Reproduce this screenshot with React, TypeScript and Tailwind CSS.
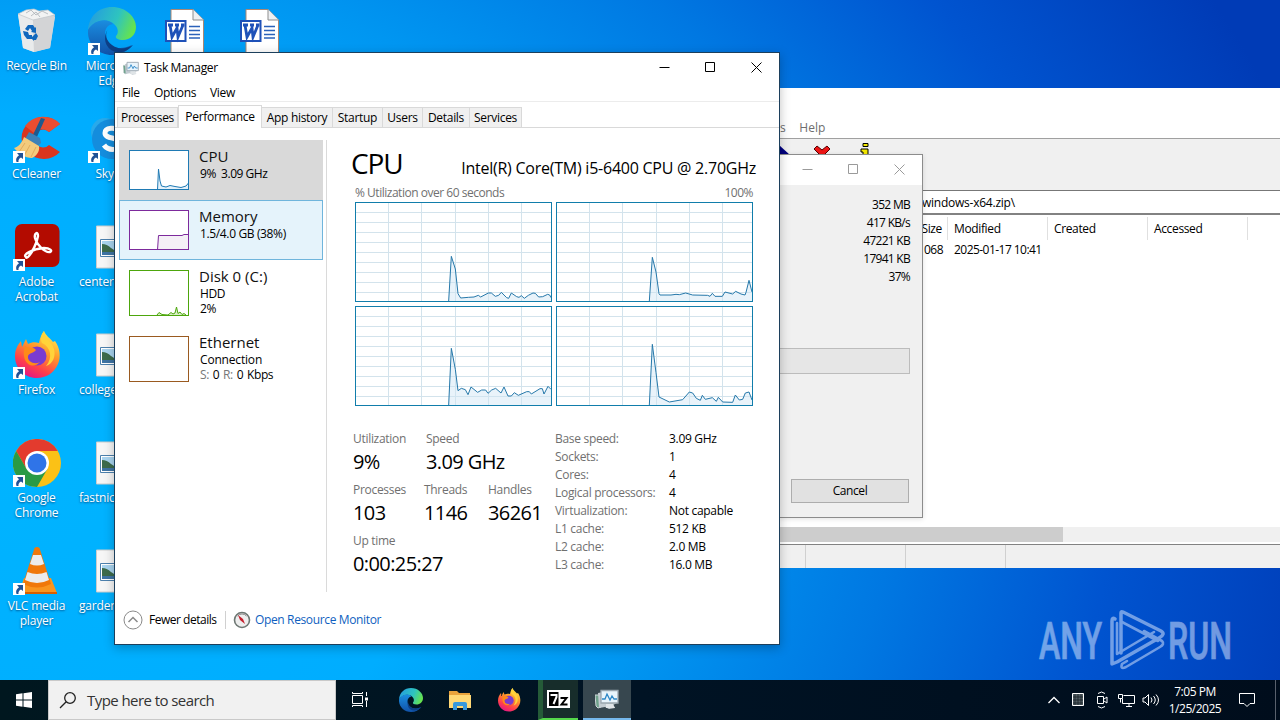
import type { ReactNode } from "react";

type Tone = "cpu" | "memory" | "disk" | "network";

const TABS = [
  { label: "Processes", width: "w-[61px]" },
  { label: "Performance", width: "w-[84px]", active: true },
  { label: "App history", width: "w-[71px]" },
  { label: "Startup", width: "w-[50px]" },
  { label: "Users", width: "w-[40px]" },
  { label: "Details", width: "w-[47px]" },
  { label: "Services", width: "w-[52px]" },
];

const CORES = [
  "281,297 289,163 301,201 309,275 317,288 340,286 357,285 370,280 377,285 400,273 409,273 421,283 431,280 439,271 455,287 461,289 469,273 485,284 492,286 499,281 508,289 520,280 534,273 541,274 551,285 563,284 578,277 584,279 588,287",
  "280,297 289,166 300,210 309,275 312,279 345,279 360,277 370,278 389,273 410,279 455,280 462,283 469,274 477,283 499,283 507,270 530,276 539,268 555,276 567,279 570,271 579,235 588,270",
  "281,297 289,127 301,190 309,254 319,247 331,251 339,266 348,243 368,259 380,252 392,252 399,262 410,252 422,247 438,261 447,243 459,270 469,270 478,260 490,268 515,257 523,257 529,264 555,248 562,248 567,264 579,241 588,250",
  "280,297 289,115 300,200 309,273 340,288 380,281 400,258 410,261 421,277 433,283 439,268 448,280 469,275 481,286 487,274 500,288 530,289 538,267 550,282 560,280 568,261 579,258 588,282",
];

const DETAILS = [
  ["Base speed:", "3.09 GHz"],
  ["Sockets:", "1"],
  ["Cores:", "4"],
  ["Logical processors:", "4"],
  ["Virtualization:", "Not capable"],
  ["L1 cache:", "512 KB"],
  ["L2 cache:", "2.0 MB"],
  ["L3 cache:", "16.0 MB"],
];

const THUMBS: Record<Tone, { stroke: string; fill: string; height: number; points: string }> = {
  cpu: {
    stroke: "#1f7ab4",
    fill: "#e4f1fa",
    height: 40,
    points: "28.5,40 29.5,19 31,31 32.5,36 37,37 41,35.5 46,36.5 52,37.5 57,36 59.5,33",
  },
  memory: { stroke: "#7d2a9c", fill: "#f4eff6", height: 40, points: "28.5,40 29.5,25.5 53,25.5 55,24.5 60,24.5" },
  disk: {
    stroke: "#4da60c",
    fill: "#d9efc8",
    height: 46,
    points: "28,45 30,42.5 33,44.5 39,45 42,42.5 44,44 46,43 47.5,37 49,43.5 51,42 53,44.5 55,43.5 57,45",
  },
  network: { stroke: "#9a5a20", fill: "none", height: 46, points: "" },
};

/* ---------- icons ---------- */

function RecycleBin() {
  return (
    <svg viewBox="0 0 48 48" className="size-12">
      <path d="M5 7l5 34 11 4 16-4 5-31-13-4z" fill="#d9dcde" />
      <path d="M5 7l15 5 1 33-11-4z" fill="#e9ebec" />
      <path d="M20 12l22-4-5 33-16 4z" fill="#d3d4d6" />
      <path d="M5 7l8-4 8-1 5 2 9-1 7 5-22 5z" fill="#f2f3f3" stroke="#bfc4c8" strokeWidth=".7" />
      <path d="M13 6l5-3 5 5 6-4 6 3M18 9l5-4 4 5" fill="none" stroke="#a9b0b5" strokeWidth=".8" />
      <g fill="#1168bd">
        <path d="M12 22l3-4h5l2 3 1-1v6l-5-1 1-1-2-3-2 3z" />
        <path d="M10 24l5 1 1 3 3 0v4h-5l-3-4z" />
        <path d="M20 29l3-3 2 3-2 4h-2v1l-3-3 3-3z" />
      </g>
    </svg>
  );
}

function EdgeLogo({ className, id }: { className: string; id: string }) {
  return (
    <svg viewBox="0 0 48 48" className={className}>
      <defs>
        <linearGradient id={`${id}a`} x1="0" y1=".2" x2="1" y2=".5">
          <stop offset="0" stopColor="#249be0" />
          <stop offset=".6" stopColor="#2ec4bf" />
          <stop offset="1" stopColor="#66e34e" />
        </linearGradient>
        <linearGradient id={`${id}b`} x1="0" y1="0" x2="0" y2="1">
          <stop offset="0" stopColor="#1a8de0" />
          <stop offset="1" stopColor="#1152a8" />
        </linearGradient>
      </defs>
      <path d="M0 23C1 9 11 0 24 0c14 0 24 10 24 20 0 8-6 13-13 13-5 0-8-2-7-4 3-3 2-8-1-11-6-7-20-6-27 5z" fill={`url(#${id}a)`} />
      <path d="M0 23c5-10 19-13 25-6-8 1-10 10-6 17 5 8 15 9 25 4-4 6-11 10-20 10C10 48-1 37 0 23z" fill={`url(#${id}b)`} />
      <path d="M21 21c-5 5-3 13 3 17 6 5 14 4 21 0-4 5-10 8-16 7-11-1-16-15-8-24z" fill="#0d3f86" />
    </svg>
  );
}

function WordDoc() {
  return (
    <svg viewBox="0 0 48 48" className="size-12">
      <path d="M8 2.500h22l10.500 10.500v35H8z" fill="#fff" stroke="#a98774" strokeWidth="1" />
      <path d="M30 2.500V13h10.500" fill="#eef0f2" stroke="#8d8d8d" strokeWidth="1" />
      <path d="M26 19.500h11M26 23.500h11M26 27.500h11M26 31h11" stroke="#2b62ba" strokeWidth="1.300" />
      <rect x="2" y="13" width="21.500" height="22" fill="#1e51b8" />
      <rect x="4" y="15" width="17.500" height="18" fill="#fff" />
      <path d="M5 18h5M12 18h4M18 18h3.500M7 18l2 12 5-9 1 9 5-12" fill="none" stroke="#1e51b8" strokeWidth="2.800" />
    </svg>
  );
}

function CCleaner() {
  return (
    <svg viewBox="0 0 48 48" className="size-12">
      <path d="M47 9A22 21 0 1 0 47 37L36 30a8.500 9 0 1 1 0-13z" fill="#d9351f" />
      <path d="M47 9A22 21 0 0 0 12 11l9 7c4-5 10-5 15-1z" fill="#ea4d30" />
      <path d="M28 3l4 1-9 20-4-2z" fill="#1d5a8f" />
      <path d="M16 17l11 6 1 5-3 3-13-7z" fill="#3d81b8" />
      <path d="M11 22l15 9c1 6-3 10-7 12C12 43 5 38 1 33c4-1 8-5 10-11z" fill="#f3cb7d" />
      <path d="M12 28L6 37m11-7l-6 11m12-9l-5 10" stroke="#e2ac5c" strokeWidth="1" />
    </svg>
  );
}

function SkypeLogo() {
  return (
    <svg viewBox="0 0 48 48" className="size-12">
      <circle cx="17" cy="17" r="14" fill="#29a9ea" />
      <circle cx="31" cy="31" r="14" fill="#1070c4" />
      <circle cx="24" cy="24" r="20" fill="#148ddd" />
      <path d="M31 16c-3-4-14-4-14 2 0 7 15 3 15 11 0 7-12 7-16 1" fill="none" stroke="#fff" strokeWidth="5" />
    </svg>
  );
}

function AcrobatLogo() {
  return (
    <svg viewBox="0 0 48 48" className="size-12">
      <rect x="2" y="1" width="44.500" height="43" rx="7" fill="#b30b00" />
      <path
        d="M13 34c-4-2 6-8 18-9 6 0 9 3 6 4-5 1-13-7-15-14-1-5 3-7 3-2-1 7-6 17-10 21-1 1-2 1-2 0z"
        fill="none"
        stroke="#fff"
        strokeWidth="2.400"
      />
    </svg>
  );
}

function FirefoxLogo({ className, id }: { className: string; id: string }) {
  return (
    <svg viewBox="0 0 48 48" className={className}>
      <defs>
        <linearGradient id={id} x1=".8" y1="0" x2=".3" y2="1">
          <stop offset="0" stopColor="#fff44f" />
          <stop offset=".4" stopColor="#ff9a2a" />
          <stop offset=".75" stopColor="#ff3f4b" />
          <stop offset="1" stopColor="#e31587" />
        </linearGradient>
      </defs>
      <path d="M31 0c2 5 6 7 9 11l2-1c5 7 6 16 3 23-4 9-12 14-21 14C11 47 2 37 2 25c0-6 2-10 6-15l1 6 4-8 2 5c4-2 7-2 11-1 1-5 2-8 5-12z" fill={`url(#${id})`} />
      <circle cx="24" cy="25" r="9.500" fill="#7a3bd0" />
      <path d="M12 15c3 3 8 0 11 4-2 3-7 3-8 6-1 6 7 9 12 6-8 9-20 0-15-16z" fill="#ff8a18" />
      <path d="M29 12c9 4 11 15 4 23 7-2 10-10 8-17-2-8-10-10-10-18-3 4-4 8-2 12z" fill="#ffd33a" />
    </svg>
  );
}

function ChromeLogo() {
  return (
    <svg viewBox="0 0 48 48" className="size-12">
      <circle cx="24" cy="24" r="24" fill="#fbc116" />
      <path d="M3.200 12A24 24 0 0 1 44.800 12H24L13.600 30z" fill="#e33b2e" />
      <path d="M3.200 12A24 24 0 0 0 24 48l10.400-18H13.600z" fill="#2a9a45" />
      <circle cx="24" cy="24" r="12" fill="#fff" />
      <circle cx="24" cy="24" r="9.500" fill="#2f74e8" />
    </svg>
  );
}

function VlcCone() {
  return (
    <svg viewBox="0 0 48 48" className="size-12">
      <path d="M11 31h27l6 15H6z" fill="#f9951f" />
      <path d="M6 45h38v2H6z" fill="#d85f00" />
      <path d="M21.500 1q2.500-2 5 0l11.500 36q-14 7-28 0z" fill="#f0780a" />
      <path d="M20 8h8l3 9q-7 3-14 0zM14.500 25q9.500 4 19 0l2.500 8q-12 6-24 0z" fill="#ececec" />
    </svg>
  );
}

function PictureFile() {
  return (
    <svg viewBox="0 0 48 48" className="size-12">
      <path d="M8.500 3h32v42h-32z" fill="#f6f6f6" stroke="#ccc" />
      <path d="M12.500 16.500h24v17h-24z" fill="#fff" stroke="#4c80ad" />
      <path d="M14 18h21v14H14z" fill="#a9d4ef" />
      <path d="M14 21q5 0 9 4t12 2v5H14z" fill="#3d6b4c" />
      <path d="M14 29h21v3H14z" fill="#3f74a4" />
    </svg>
  );
}

function ShortcutArrow() {
  return (
    <svg viewBox="0 0 12 12" className="absolute bottom-0 left-0 size-3">
      <path d="M0 0h12v12H0z" fill="#fff" />
      <path d="M4 2h6v6L8 6.500Q5 8 5.500 11H3.500Q2 7 6 4.300z" fill="#215296" />
    </svg>
  );
}

function MonitorIcon({ className }: { className: string }) {
  return (
    <svg viewBox="0 0 24 24" className={className}>
      <path d="M0 8h6v12l-3 1-2-2z" fill="#6fa28c" stroke="#cdd5d8" />
      <path d="M3 6l17-3 2 13-4 2 2 3-6 1-4-2-6 1z" fill="#c3ccd2" />
      <path d="M6 3.500h17v12.500H6z" fill="#e8f4fc" stroke="#9aa6af" strokeWidth="1.300" />
      <path d="M7 12h3l2-5 3 6 2-4 2 3h3" fill="none" stroke="#2d86c6" strokeWidth="1.300" />
      <path d="M11 17h7l2 4h-9z" fill="#dfe4e7" />
    </svg>
  );
}

function WindowButtons({ muted = false }: { muted?: boolean }) {
  return (
    <div className={muted ? "flex text-[#9a9a9a]" : "flex text-black"}>
      {["M.5 5.500h10", "M.5 .5h9v9h-9z", "M.5 .5l10 10m0-10l-10 10"].map((path) => (
        <span key={path} className="flex h-[29px] w-[46px] items-center justify-center">
          <svg viewBox="0 0 11 11" className="size-[11px]" fill="none" stroke="currentColor">
            <path d={path} />
          </svg>
        </span>
      ))}
    </div>
  );
}

/* ---------- desktop ---------- */

const DESKTOP: { label: string; icon: ReactNode; shortcut?: boolean; clipped?: boolean }[] = [
  { label: "Recycle Bin", icon: <RecycleBin /> },
  { label: "CCleaner", icon: <CCleaner />, shortcut: true },
  { label: "Adobe Acrobat", icon: <AcrobatLogo />, shortcut: true },
  { label: "Firefox", icon: <FirefoxLogo className="size-12" id="ffDesk" />, shortcut: true },
  { label: "Google Chrome", icon: <ChromeLogo />, shortcut: true },
  { label: "VLC media player", icon: <VlcCone />, shortcut: true },
  { label: "Microsoft Edge", icon: <EdgeLogo className="size-12" id="edgeDesk" />, shortcut: true },
  { label: "Skype", icon: <SkypeLogo />, shortcut: true },
  { label: "centers", icon: <PictureFile />, clipped: true },
  { label: "college", icon: <PictureFile />, clipped: true },
  { label: "fastnic", icon: <PictureFile />, clipped: true },
  { label: "garden", icon: <PictureFile />, clipped: true },
  { label: "", icon: <WordDoc /> },
];

function DesktopIcon({ label, icon, shortcut, clipped }: (typeof DESKTOP)[number]) {
  return (
    <div className="h-[108px] w-[75px]">
      <div className="relative ml-[13px] size-12">
        {icon}
        {shortcut ? <ShortcutArrow /> : null}
      </div>
      <p
        className={`mt-[3px] text-[12px] leading-[15px] tracking-[-0.015em] text-white [text-shadow:0_1px_2px_rgba(0,40,90,.7)] ${
          clipped ? "pl-1 text-left" : "pr-[5px] pl-[3px] text-center"
        }`}
      >
        {label}
      </p>
    </div>
  );
}

/* ---------- 7-Zip windows ---------- */

function ArchiveWindow() {
  return (
    <section className="absolute top-[88px] left-[779px] flex h-[480px] w-[501px] flex-col overflow-hidden bg-white text-[12px] tracking-[-0.03em]">
      <div className="h-[30px]" />
      <div className="flex h-[20px] items-center gap-[14px] text-[#6d6d6d]">
        <span className="pl-px">s</span>
        <span className="tracking-normal">Help</span>
      </div>
      <div className="flex h-[53px] border-t border-b border-t-[#a0a0a0] border-b-[#777] bg-[#f0f0f0] pt-[6px]">
        <svg viewBox="0 0 12 12" className="size-3">
          <path d="M0 0l11 10H0z" fill="#000080" />
        </svg>
        <svg viewBox="0 0 18 16" className="ml-[22px] h-4 w-[18px]">
          <path d="M1 4l3-3 5 4 5-4 3 3-5 5 5 5-3 2-5-4-5 4-3-2 5-5z" fill="#ed1515" stroke="#500" />
        </svg>
        <svg viewBox="0 0 10 16" className="-mt-[2px] ml-[29px] h-4 w-[10px]">
          <path d="M3 .5h5v3H3zM1 6h7v9H3V9H1z" fill="#f4e800" stroke="#000" />
        </svg>
      </div>
      <div className="flex h-[24px] items-center border-b-2 border-[#828282] pt-[2px] pl-[143px] tracking-[-0.02em]">windows-x64.zip\</div>
      <div className="flex h-[25px] items-center pt-[2px]">
        <span className="h-full w-[169px] border-r border-[#e0e0e0] pt-[3px] pr-[5px] text-right">Size</span>
        <span className="h-full w-[100px] border-r border-[#e0e0e0] pt-[3px] pl-[6px]">Modified</span>
        <span className="h-full w-[100px] border-r border-[#e0e0e0] pt-[3px] pl-[6px]">Created</span>
        <span className="h-full w-[100px] border-r border-[#e0e0e0] pt-[3px] pl-[6px]">Accessed</span>
      </div>
      <div className="flex h-[20px] items-center tracking-[-0.045em]">
        <span className="w-[169px] pr-[5px] text-right">068</span>
        <span className="pl-[6px]">2025-01-17 10:41</span>
      </div>
      <div className="flex-1" />
      <div className="h-[15px] bg-[#f0f0f0]">
        <div className="h-full w-[284px] bg-[#cdcdcd]" />
      </div>
      <div className="mt-[2px] flex h-[24px] border-t border-t-[#828282] bg-[#f0f0f0]">
        <span className="w-[27px] border-r border-[#d0d0d0]" />
        <span className="w-[100px] border-r border-[#d0d0d0]" />
        <span className="w-[100px] border-r border-[#d0d0d0]" />
      </div>
    </section>
  );
}

function ExtractDialog() {
  return (
    <section className="absolute top-[154px] left-[779px] flex h-[364px] w-[144px] flex-col border border-l-0 border-[#8c8c8c] bg-[#f0f0f0] text-[12px] tracking-[-0.06em] shadow-[0_1px_5px_rgba(0,0,0,.12)]">
      <div className="flex h-[30px] justify-end bg-white">
        <WindowButtons muted />
      </div>
      <div className="flex h-[163px] flex-col items-end pt-[11px] pr-[12px] leading-[18px]">
        {["352 MB", "417 KB/s", "47221 KB", "17941 KB", "37%"].map((value) => (
          <span key={value}>{value}</span>
        ))}
      </div>
      <div className="h-[26px] w-[131px] border border-l-0 border-[#bcbcbc] bg-[#e6e6e6]" />
      <div className="mt-[105px] ml-[12px] flex h-[24px] w-[118px] items-center justify-center border border-[#adadad] bg-[#e1e1e1] tracking-[-0.035em]">
        Cancel
      </div>
    </section>
  );
}

/* ---------- Task Manager ---------- */

function Thumb({ tone }: { tone: Tone }) {
  const { stroke, fill, height, points } = THUMBS[tone];
  return (
    <svg viewBox={`0 0 60 ${height}`} width="60" height={height} className="shrink-0" fill="none" stroke={stroke}>
      <rect x=".5" y=".5" width="59" height={height - 1} fill="#fff" />
      {points ? <polygon points={`${points} 60,${height} 28,${height}`} fill={fill} stroke="none" /> : null}
      <polyline points={points} />
      <rect x=".5" y=".5" width="59" height={height - 1} />
    </svg>
  );
}

function SideItem({ tone, title, className, children }: { tone: Tone; title: string; className: string; children: ReactNode }) {
  return (
    <div className={`flex w-[204px] gap-[10px] ${className}`}>
      <Thumb tone={tone} />
      <div className="text-[12px] leading-[15px] tracking-[-0.03em] whitespace-nowrap">
        <p className="-mt-[3px] text-[15px] leading-[19px] tracking-normal text-[#111]">{title}</p>
        <div className="pl-px">{children}</div>
      </div>
    </div>
  );
}

function CoreGraph({ points }: { points: string }) {
  return (
    <svg viewBox="0 0 591 300" className="h-[100px] w-[197px]" fill="none">
      <rect width="591" height="300" fill="#fff" />
      <g stroke="#d3e3ec" strokeWidth="3">
        {[100.5, 199.5, 301.5, 400.5, 499.5].map((x) => (
          <path key={x} d={`M${x} 0v300`} />
        ))}
        {[31.5, 61.5, 91.5, 121.5, 151.5, 181.5, 211.5, 241.5, 271.5].map((y) => (
          <path key={y} d={`M0 ${y}h591`} />
        ))}
      </g>
      <polygon points={`${points} 588,297`} fill="#cfe4f5" fillOpacity=".45" />
      <polyline points={points} stroke="#2578aa" strokeWidth="3" />
      <rect x="1.500" y="1.500" width="588" height="297" stroke="#117dab" strokeWidth="3" />
    </svg>
  );
}

function Stat({ label, value, className = "" }: { label: string; value: string; className?: string }) {
  return (
    <div className={`h-[51px] ${className}`}>
      <p className="h-[18px] text-[12px] leading-[18px] tracking-[-0.025em] text-[#707070]">{label}</p>
      <p className="text-[20px] leading-[28px] tracking-[-0.03em] whitespace-nowrap">{value}</p>
    </div>
  );
}

function TaskManager() {
  return (
    <section className="absolute top-[52px] left-[114px] flex h-[593px] w-[666px] flex-col border border-[#1c3f5c] bg-white text-[12px] tracking-[-0.025em] text-black shadow-[0_3px_10px_rgba(0,0,0,.25)]">
      <header className="flex h-[31px] justify-between">
        <div className="flex items-center gap-[5px] pb-px pl-[8px]">
          <MonitorIcon className="size-4" />
          <span className="tracking-[-0.03em]">Task Manager</span>
        </div>
        <WindowButtons />
      </header>
      <nav className="flex h-[18px] items-center border-b border-[#ececec] pl-[7px]">
        <span className="w-[32px]">File</span>
        <span className="w-[56px]">Options</span>
        <span>View</span>
      </nav>
      <div className="flex h-[26px] items-end border-b border-[#d9d9d9] pl-[2px]">
        {TABS.map((tab) => (
          <div
            key={tab.label}
            className={`flex shrink-0 items-center justify-center border border-[#d9d9d9] whitespace-nowrap ${tab.width} ${
              tab.active ? "-mb-px h-[23px] border-b-0 bg-white pb-px" : "h-[20px] border-b-0 border-l-0 bg-[#f0f0f0] first:border-l"
            }`}
          >
            {tab.label}
          </div>
        ))}
      </div>

      <div className="flex h-[464px] pt-[12px]">
        <aside className="w-[212px] border-r border-[#dadada] pl-[4px]">
          <SideItem tone="cpu" title="CPU" className="h-[60px] bg-[#d9d9d9] pt-[10px] pl-[10px]">
            <span className="tracking-[-0.04em]">9%&nbsp; 3.09 GHz</span>
          </SideItem>
          <SideItem tone="memory" title="Memory" className="h-[60px] border border-[#70b5dc] bg-[#e5f3fb] pt-[9px] pl-[9px]">
            1.5/4.0 GB (38%)
          </SideItem>
          <SideItem tone="disk" title="Disk 0 (C:)" className="h-[66px] pt-[10px] pl-[10px]">
            <p>HDD</p>
            <p>2%</p>
          </SideItem>
          <SideItem tone="network" title="Ethernet" className="h-[66px] pt-[10px] pl-[10px]">
            <p className="tracking-[-0.015em]">Connection</p>
            <p className="[word-spacing:1px]">
              <span className="text-[#777]">S:</span> 0 <span className="text-[#777]">R:</span> 0 Kbps
            </p>
          </SideItem>
        </aside>

        <main className="w-[451px] pl-[28px]">
          <div className="flex h-[45px] w-[401px] items-baseline justify-between pt-[4px]">
            <h1 className="-ml-[4px] text-[28px] leading-[38px] tracking-[-0.04em]">CPU</h1>
            <p className="text-[16px] tracking-[-0.015em] whitespace-nowrap">Intel(R) Core(TM) i5-6400 CPU @ 2.70GHz</p>
          </div>
          <div className="flex h-[17px] w-[398px] items-center justify-between pb-px tracking-[-0.04em] text-[#707070]">
            <span>% Utilization over 60 seconds</span>
            <span>100%</span>
          </div>
          <div className="grid w-[398px] grid-cols-2 gap-1">
            {CORES.map((points) => (
              <CoreGraph key={points} points={points} />
            ))}
          </div>
          <div className="-ml-[2px] flex pt-[24px]">
            <div className="w-[202px]">
              <div className="flex">
                <Stat label="Utilization" value="9%" className="w-[73px]" />
                <Stat label="Speed" value="3.09 GHz" />
              </div>
              <div className="flex">
                <Stat label="Processes" value="103" className="w-[71px]" />
                <Stat label="Threads" value="1146" className="w-[64px]" />
                <Stat label="Handles" value="36261" />
              </div>
              <Stat label="Up time" value="0:00:25:27" />
            </div>
            <dl className="leading-[18px] whitespace-nowrap">
              {DETAILS.map(([label, value]) => (
                <div key={label} className="flex">
                  <dt className="w-[114px] text-[#707070]">{label}</dt>
                  <dd>{value}</dd>
                </div>
              ))}
            </dl>
          </div>
        </main>
      </div>

      <footer className="flex flex-1 items-center pt-[3px] pl-[8px]">
        <svg viewBox="0 0 20 20" className="size-5" fill="none">
          <circle cx="10" cy="10" r="9" stroke="#8a8a8a" />
          <path d="M5.500 12L10 7.500l4.500 4.500" stroke="#8a8a8a" strokeWidth="1.500" />
        </svg>
        <span className="ml-[6px] w-[77px] border-r border-[#d0d0d0] tracking-[-0.04em]">Fewer details</span>
        <svg viewBox="0 0 18 18" className="ml-[7px] size-[18px]" fill="none">
          <circle cx="9" cy="9" r="7.500" fill="#eee" stroke="#6d7773" strokeWidth="1.600" />
          <path d="M4.500 5a6 6 0 0 1 9 0" stroke="#888" />
          <path d="M5 4l5 4 2 5-5-4z" fill="#c51f2d" />
        </svg>
        <span className="ml-[4px] tracking-[-0.03em] text-[#0f5fc0]">Open Resource Monitor</span>
      </footer>
    </section>
  );
}

/* ---------- taskbar ---------- */

function Taskbar() {
  return (
    <footer className="absolute bottom-0 left-0 flex h-10 w-full bg-linear-to-r from-[#00171f] via-[#001324] to-[#000d1c] text-white">
      <div className="flex w-12 items-center justify-center">
        <svg viewBox="0 0 16 16" className="size-4" fill="#fff">
          <path d="M0 2.200l6.500-.9v6.200H0zM7.500 1.200L16 0v7.500H7.500zM0 8.500h6.500v6.200L0 13.800zM7.500 8.500H16V16l-8.500-1.200z" />
        </svg>
      </div>
      <div className="flex w-72 items-center border border-[#c9c9c9] bg-[#f1f1f1] pl-[10px] text-[#333]">
        <svg viewBox="0 0 18 18" className="size-[18px]" fill="none" stroke="#222" strokeWidth="1.300">
          <circle cx="11" cy="7" r="5.300" />
          <path d="M7.200 10.800L1 17" />
        </svg>
        <span className="ml-[10px] text-[15px] tracking-[-0.038em]">Type here to search</span>
      </div>
      <div className="flex w-12 items-center justify-center">
        <svg viewBox="0 0 18 18" className="size-[18px]" fill="none" stroke="#fff">
          <path d="M1.500 4.500h10v8h-10zM1.500 1v1.500h10V1M1.500 16v-1.500h10V16M15.500 1v4M15.500 10v6" />
          <path d="M14 6.500h3v3h-3z" fill="#fff" stroke="none" />
        </svg>
      </div>
      <div className="flex w-[54px] items-center justify-center">
        <EdgeLogo className="size-6" id="edgeBar" />
      </div>
      <div className="flex w-[44px] items-center justify-center">
        <svg viewBox="0 0 22 20" className="h-5 w-[22px]">
          <path d="M0 1h8l2 2h11v15H0z" fill="#e9a33c" />
          <path d="M0 5h22v13H0z" fill="#ffd875" />
          <path d="M4 20v-6q0-2 2-2h10q2 0 2 2v6h-4v-4H8v4z" fill="#3798dc" />
        </svg>
      </div>
      <div className="flex w-[54px] items-center justify-center">
        <FirefoxLogo className="size-6" id="ffBar" />
      </div>
      <div className="mr-[5px] ml-[2px] flex w-10 items-center justify-center border-b-2 border-l-[5px] border-b-[#55d84b] border-l-[#255b38] bg-[#172d2b]">
        <svg viewBox="0 0 23 18" className="mr-[4px] h-[18px] w-[23px]">
          <path d="M0 0h23v18H0z" fill="#fff" />
          <path d="M2 2h9.500v14H2z" fill="#000" />
          <path d="M3.500 5h6v2l-3 7" fill="none" stroke="#fff" strokeWidth="2" />
          <path d="M13.500 8h6l-5 6.500h6" fill="none" stroke="#000" strokeWidth="2" />
        </svg>
      </div>
      <div className="flex w-12 items-center justify-center border-b-2 border-[#76b9ed] bg-[#37474f]">
        <MonitorIcon className="size-6" />
      </div>
      <div className="flex flex-1 items-center justify-end">
        <svg viewBox="0 0 12 8" className="h-2 w-3" fill="none" stroke="#fff" strokeWidth="1.300">
          <path d="M.5 7L6 1.500 11.500 7" />
        </svg>
        <svg viewBox="0 0 12 14" className="ml-[12px] h-[14px] w-3">
          <path d="M.5 .5h11v12H.5z" fill="#525e64" stroke="#fff" />
          <path d="M3 1v11M6 1v11M9 1v11M1 4h10M1 7h10M1 10h10" stroke="#161e24" strokeWidth=".7" />
        </svg>
        <svg viewBox="0 0 12 18" className="ml-[12px] h-[18px] w-3" fill="none" stroke="#fff">
          <path d="M1.500 5.500h6v7h-6zM8 8l3-2v6l-3-2M2 2.500q3.500-3 7 0M2 15.500q3.500 3 7 0" />
        </svg>
        <svg viewBox="0 0 17 15" className="ml-[10px] h-[15px] w-[17px]" fill="none" stroke="#fff">
          <path d="M5.500 2.500h11v8h-12V6M8 13.500h6M11 10.500v3M.5 1.500h4v4h-4zM2.500 5.500v4" />
        </svg>
        <svg viewBox="0 0 17 14" className="ml-[7px] h-[14px] w-[17px]" fill="none" stroke="#fff">
          <path d="M1 5h2l3.500-3.500v11L3 9H1zM9 4.500q2 2.500 0 5M11.500 3q3.500 4 0 8M14 1.500q5 5.500 0 11" />
        </svg>
        <div className="ml-[8px] w-[56px] text-center text-[12px] leading-[17px] tracking-[-0.04em] whitespace-nowrap">
          <p>7:05 PM</p>
          <p>1/25/2025</p>
        </div>
        <svg viewBox="0 0 16 16" className="ml-[16px] h-4 w-4" fill="none" stroke="#fff">
          <path d="M.5 1.500h15v10h-4.500L8 14.500 5 11.500H.5z" />
        </svg>
        <div className="ml-[20px] h-full w-[5px] border-l border-[#59616d]" />
      </div>
    </footer>
  );
}

function Watermark() {
  return (
    <svg viewBox="0 0 230 76" className="absolute top-[605px] left-[1035px] h-[76px] w-[230px] opacity-50">
      <g fill="#e2ecff" stroke="#e2ecff" strokeWidth=".7" fontFamily="Roboto, sans-serif" fontSize="52" fontWeight="500">
        <text x="4" y="54" textLength="63" lengthAdjust="spacingAndGlyphs">
          ANY
        </text>
        <text x="133" y="54" textLength="64" lengthAdjust="spacingAndGlyphs">
          RUN
        </text>
      </g>
      <g fill="none" stroke="#e2ecff" strokeWidth="3.500" strokeLinejoin="round" strokeLinecap="round">
        <path d="M80 14q-3-2-3 2v43l5-2 42-24q7-4 2-7L88 7q-2-1-2 1v40" />
        <path d="M82 18v31l37-22M87 17l36 19M92 56l-5 3q-2 6 4 3l34-20q5-3 2-6l-18-10" strokeWidth="2.600" />
      </g>
    </svg>
  );
}

export default function App() {
  return (
    <div className="relative h-[720px] w-[1280px] overflow-hidden bg-[radial-gradient(ellipse_1360px_1020px_at_0px_460px,#00b4ff_0%,#00adff_34%,#0096f1_50%,#0078e2_66%,#0054d0_82%,#003bb6_100%)] font-['Open_Sans','Noto_Sans',sans-serif]">
      <div className="grid w-[300px] grid-flow-col grid-cols-4 grid-rows-6 pt-[7px]">
        {DESKTOP.map((item) => (
          <DesktopIcon key={item.label || "document"} {...item} />
        ))}
        <div className="col-start-4 row-start-1">
          <DesktopIcon label="" icon={<WordDoc />} />
        </div>
      </div>
      <Watermark />
      <ArchiveWindow />
      <ExtractDialog />
      <TaskManager />
      <Taskbar />
    </div>
  );
}
